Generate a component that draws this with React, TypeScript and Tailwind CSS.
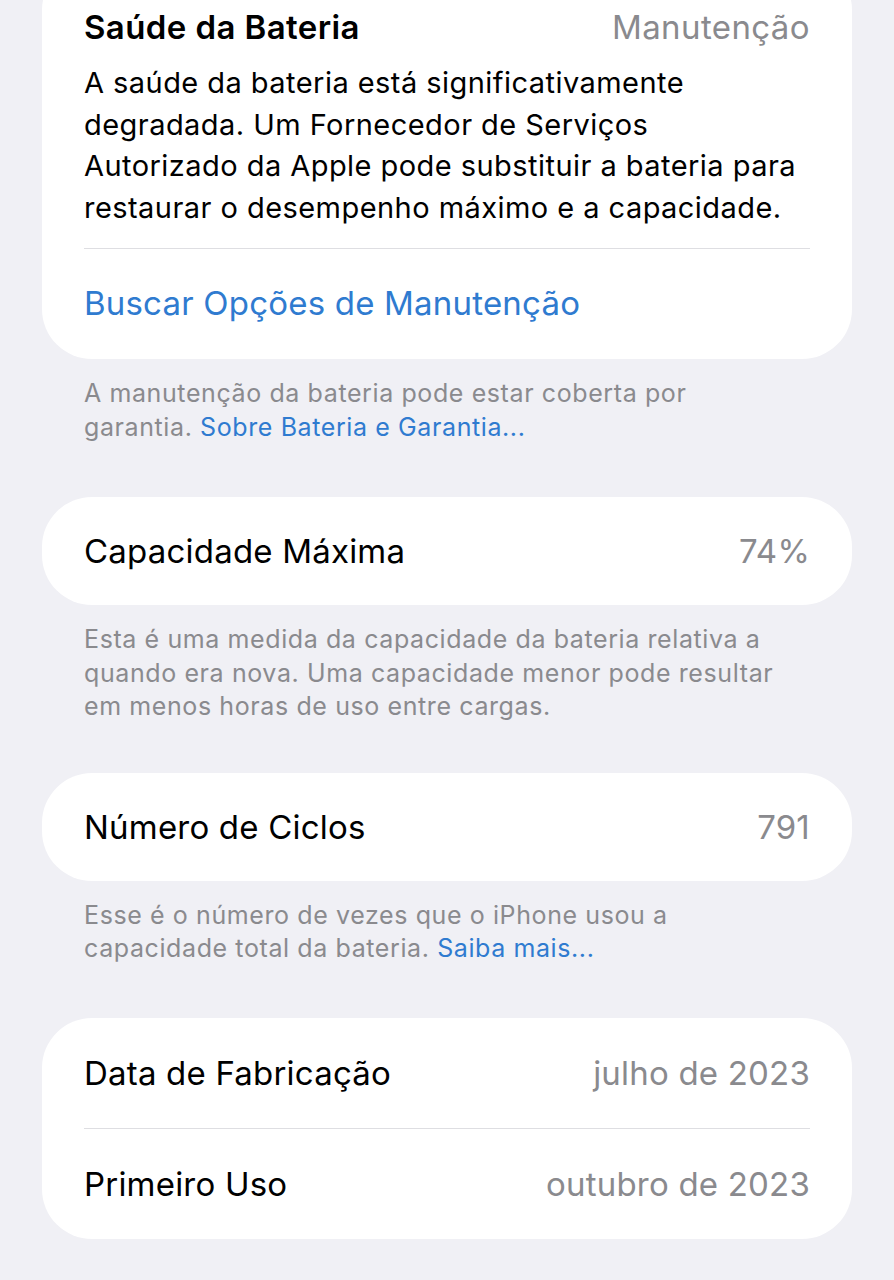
import React from "react";

type Row = { label: string; value: string };

function Card({ children, className = "" }: { children: React.ReactNode; className?: string }) {
  return (
    <div className={`mx-[42px] rounded-[50px] bg-white px-[42px] ${className}`}>{children}</div>
  );
}

function ValueRow({ label, value, tall = false }: Row & { tall?: boolean }) {
  return (
    <div
      className={`flex items-center justify-between text-[33px] leading-[40px] tracking-[0.2px] ${
        tall ? "h-[110px]" : "h-[108px]"
      }`}
    >
      <span className="text-black">{label}</span>
      <span className="text-[#8a8a8e]">{value}</span>
    </div>
  );
}

function Footer({ children }: { children: React.ReactNode }) {
  return (
    <p className="ml-[84px] mr-[100px] mt-[18px] text-[25px] leading-[33.5px] tracking-[0.6px] text-[#8a8a8e]">
      {children}
    </p>
  );
}

const link = "text-[#2f7bd0]";

export default function App() {
  return (
    <div
      className="min-h-[1280px] overflow-hidden bg-[#f0f0f5] pb-10"
      style={{ fontFamily: "Inter, 'Noto Sans', sans-serif" }}
    >
      {/* battery health card, its top is scrolled off */}
      <Card className="-mt-[40px] pt-[47px]">
        <div className="flex items-center justify-between text-[33px] leading-[40px] tracking-[0.4px]">
          <span className="font-semibold text-black">Saúde da Bateria</span>
          <span className="text-[#8a8a8e]">Manutenção</span>
        </div>
        <p className="mt-[15px] whitespace-nowrap text-[29px] leading-[41.5px] tracking-[0.45px] text-black">
          A saúde da bateria está significativamente
          <br />
          degradada. Um Fornecedor de Serviços
          <br />
          Autorizado da Apple pode substituir a bateria para
          <br />
          restaurar o desempenho máximo e a capacidade.
        </p>
        <div className="mt-[20px] h-px bg-[#dedee2]" />
        <div className="flex h-[110px] items-center text-[33px] tracking-[0.2px] text-[#2f7bd0]">
          Buscar Opções de Manutenção
        </div>
      </Card>
      <Footer>
        A manutenção da bateria pode estar coberta por garantia.{" "}
        <span className={link}>Sobre Bateria e Garantia...</span>
      </Footer>

      <Card className="mt-[53px]">
        <ValueRow label="Capacidade Máxima" value="74%" />
      </Card>
      <Footer>
        Esta é uma medida da capacidade da bateria relativa a quando era nova. Uma capacidade
        menor pode resultar em menos horas de uso entre cargas.
      </Footer>

      <Card className="mt-[49px]">
        <ValueRow label="Número de Ciclos" value="791" />
      </Card>
      <Footer>
        Esse é o número de vezes que o iPhone usou a capacidade total da bateria.{" "}
        <span className={link}>Saiba mais...</span>
      </Footer>

      <Card className="mt-[52px]">
        <ValueRow tall label="Data de Fabricação" value="julho de 2023" />
        <div className="h-px bg-[#dedee2]" />
        <ValueRow tall label="Primeiro Uso" value="outubro de 2023" />
      </Card>
    </div>
  );
}
